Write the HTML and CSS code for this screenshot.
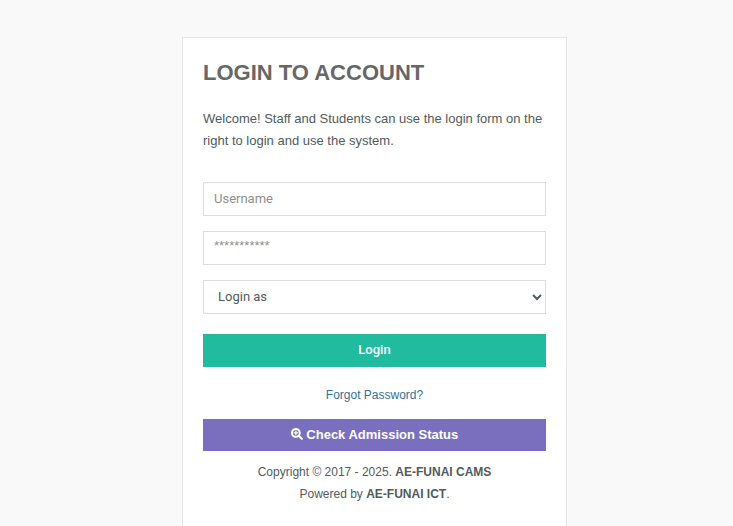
FILE: index.html
```html
<!DOCTYPE html>
<html lang="en">
<head>
    <meta charset="UTF-8">
    <meta name="viewport" content="width=device-width, initial-scale=1.0">
    <title>Login to Account</title>
    <link rel="stylesheet" href="styles.css">
</head>
<body>
    <div class="login-box">
        <h2>LOGIN TO ACCOUNT</h2>
        <p class="intro">Welcome! Staff and Students can use the login form on the right to login and use the system.</p>

        <form class="login-form">
            <input type="text" class="form-control" placeholder="Username">
            <input type="password" class="form-control password" placeholder="***********">
            <select class="form-control select-role">
                <option>Login as</option>
            </select>
            <button type="button" class="btn btn-login">Login</button>
        </form>

        <a href="#" class="forgot">Forgot Password?</a>

        <a href="#" class="btn btn-check">
            <svg class="icon" viewBox="0 0 512 512" aria-hidden="true">
                <path d="M505 442.700L405.300 343c-4.500-4.500-10.600-7-17-7H372c27.600-35.300 44-79.700 44-128C416 93.100 322.900 0 208 0S0 93.100 0 208s93.100 208 208 208c48.300 0 92.700-16.400 128-44v16.300c0 6.400 2.500 12.500 7 17l99.700 99.700c9.400 9.400 24.600 9.400 33.900 0l28.300-28.300c9.400-9.400 9.400-24.600.1-34zM208 336c-70.700 0-128-57.200-128-128 0-70.700 57.200-128 128-128 70.700 0 128 57.200 128 128 0 70.700-57.200 128-128 128zm88-152h-64v-64c0-6.600-5.400-12-12-12h-24c-6.600 0-12 5.400-12 12v64h-64c-6.600 0-12 5.400-12 12v24c0 6.600 5.400 12 12 12h64v64c0 6.600 5.400 12 12 12h24c6.600 0 12-5.400 12-12v-64h64c6.600 0 12-5.400 12-12v-24c0-6.600-5.400-12-12-12z"/>
            </svg>
            Check Admission Status
        </a>

        <div class="copyright">
            <p>Copyright © 2017 - 2025. <strong>AE-FUNAI CAMS</strong></p>
            <p>Powered by <strong>AE-FUNAI ICT</strong>.</p>
        </div>
    </div>
</body>
</html>
```

FILE: styles.css
```css
* {
    box-sizing: border-box;
    margin: 0;
    padding: 0;
}

html, body {
    height: 100%;
    overflow: hidden;
}

body {
    font-family: 'Liberation Sans', Arial, sans-serif;
    font-size: 13px;
    color: #505b60;
    background-color: #f9f9f9;
    padding-top: 37px;
}

.login-box {
    width: 385px;
    height: 489px;
    margin-left: 182px;
    padding: 20px 20px 0;
    background: #fff;
    border: 1px solid #e7e7e7;
    border-bottom: 0;
}

h2 {
    font-size: 22px;
    line-height: 30px;
    font-weight: 700;
    color: #676767;
    margin-bottom: 20px;
}

.intro {
    line-height: 22px;
    margin-bottom: 30px;
}

.login-form {
    display: flex;
    flex-direction: column;
    gap: 15px;
}

.form-control {
    width: 100%;
    height: 34px;
    padding: 0 10px 2px;
    font-family: Roboto, sans-serif;
    font-size: 13px;
    color: #505b60;
    background: #fff;
    border: 1px solid #ddd;
    border-radius: 0;
}

.form-control::placeholder {
    color: #8f8f8f;
}

.password {
    padding-bottom: 6px;
    font-family: 'Liberation Sans', Arial, sans-serif;
}

.btn {
    display: block;
    width: 100%;
    border: 0;
    color: #fff;
    text-align: center;
    text-decoration: none;
    font-weight: 700;
    cursor: pointer;
}

.btn-login {
    height: 33px;
    margin-top: 5px;
    padding-bottom: 2px;
    font-family: Roboto, sans-serif;
    font-size: 13px;
    font-weight: 500;
    background-color: #21bba0;
}

.forgot {
    display: block;
    margin-top: 20px;
    font-size: 12px;
    line-height: 16px;
    text-align: center;
    color: #33729a;
    text-decoration: none;
}

.btn-check {
    height: 32px;
    margin-top: 16px;
    font-size: 13px;
    line-height: 31px;
    background-color: #7a6fbe;
}

.icon {
    width: 12px;
    height: 12px;
    fill: #fff;
    vertical-align: -1px;
}

.copyright {
    margin-top: 10px;
    font-size: 12px;
    line-height: 22px;
    text-align: center;
}
```
